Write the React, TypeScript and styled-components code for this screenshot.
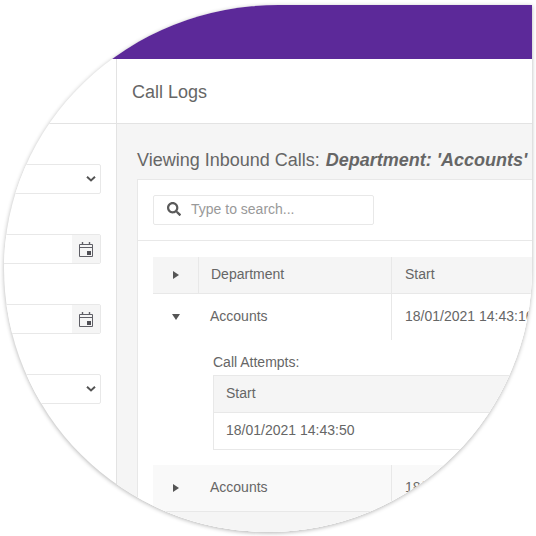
import React from "react";
import styled, { createGlobalStyle } from "styled-components";
import { FaSearch } from "react-icons/fa";

const Global = createGlobalStyle`
  html, body { margin: 0; padding: 0; background: #fff; }
  body { font-family: "Liberation Sans", Arial, sans-serif; color: #666; }
`;

const Page = styled.div`
  width: 536px;
  height: 536px;
  padding: 5px 4px 4px 4px;
  box-sizing: border-box;
  background: #fff;
  overflow: hidden;
`;

const Shell = styled.div`
  width: 528px;
  height: 527px;
  border-radius: 52% 0 50% 50% / 50% 0 50% 50%;
  overflow: hidden;
  background: #fff;
  box-shadow: 0 1px 4px rgba(0, 0, 0, 0.3);
  display: flex;
  flex-direction: column;
`;

const TopBar = styled.div`
  height: 54px;
  flex: none;
  background: #5c2999;
`;

const Body = styled.div`
  flex: 1;
  min-height: 0;
  display: flex;
`;

const Sidebar = styled.aside`
  width: 112px;
  flex: none;
  border-right: 1px solid #e3e3e3;
  display: flex;
  flex-direction: column;
  overflow: hidden;
`;

const SideHead = styled.div`
  height: 64px;
  flex: none;
  border-bottom: 1px solid #e3e3e3;
`;

const Fields = styled.div`
  display: flex;
  flex-direction: column;
  align-items: flex-end;
  gap: 40px;
  padding: 40px 15px 0 0;
`;

const Field = styled.div`
  width: 200px;
  height: 30px;
  flex: none;
  box-sizing: border-box;
  border: 1px solid #e8e8e8;
  border-radius: 2px;
  background: #fff;
  display: flex;
  justify-content: flex-end;
  align-items: stretch;
`;

const Chevron = styled.span`
  width: 14px;
  display: flex;
  align-items: center;
  color: #555;
`;

const Addon = styled.span`
  width: 28px;
  background: #f5f5f5;
  display: flex;
  align-items: center;
  justify-content: center;
`;

const Main = styled.main`
  flex: 1;
  min-width: 0;
  display: flex;
  flex-direction: column;
  overflow: hidden;
`;

const Header = styled.header`
  height: 65px;
  flex: none;
  box-sizing: border-box;
  border-bottom: 1px solid #e3e3e3;
  padding: 2px 0 0 15px;
  display: flex;
  align-items: center;
  font-size: 18px;
  color: #666;
`;

const Content = styled.div`
  flex: 1;
  min-height: 0;
  background: #f5f5f5;
  padding: 26px 0 0 20px;
`;

const Title = styled.h2`
  margin: 0 0 9px;
  font-size: 18px;
  line-height: 20px;
  font-weight: 400;
  color: #666;
  white-space: nowrap;
  em { font-weight: 700; font-style: italic; margin-left: 1px; }
`;

const Card = styled.section`
  width: 600px;
  background: #fff;
  border: 1px solid #e8e8e8;
  box-sizing: border-box;
`;

const SearchBar = styled.div`
  padding: 15px;
  border-bottom: 1px solid #e8e8e8;
`;

const SearchBox = styled.div`
  width: 221px;
  height: 30px;
  box-sizing: border-box;
  border: 1px solid #e8e8e8;
  border-radius: 2px;
  display: flex;
  align-items: center;
  padding: 0 0 2px 13px;
  gap: 10px;
  font-size: 14px;
  color: #999;
  svg { color: #5a5a5a; }
`;

const TableWrap = styled.div`
  padding: 16px 15px 0;
`;

const RowGrid = styled.div<{ $tone?: string; $line?: boolean; $height: number }>`
  display: grid;
  grid-template-columns: 45px 193px 1fr;
  height: ${(p) => p.$height}px;
  box-sizing: border-box;
  background: ${(p) => p.$tone ?? "#fff"};
  border-bottom: ${(p) => (p.$line ? "1px solid #e8e8e8" : "0")};
  font-size: 14px;
  color: #666;
`;

const ToggleCell = styled.div`
  display: flex;
  align-items: center;
  justify-content: center;
  padding-left: 1px;
`;

const Cell = styled.div<{ $pad?: number }>`
  display: flex;
  align-items: center;
  border-left: 1px solid #e8e8e8;
  padding: 0 0 2px ${(p) => p.$pad ?? 12}px;
  white-space: nowrap;
`;

const PlainCell = styled(Cell)`
  border-left: 0;
`;

const Detail = styled.div`
  padding: 14px 0 15px 60px;
`;

const DetailLabel = styled.div`
  font-size: 14px;
  line-height: 16px;
  margin-bottom: 5px;
  color: #666;
`;

const Nested = styled.div`
  border: 1px solid #e8e8e8;
  border-right: 0;
  font-size: 14px;
  color: #666;
`;

const NestedHead = styled.div`
  height: 37px;
  box-sizing: border-box;
  background: #f5f5f5;
  border-bottom: 1px solid #e8e8e8;
  display: flex;
  align-items: center;
  padding: 0 0 2px 12px;
`;

const NestedRow = styled.div`
  height: 36px;
  box-sizing: border-box;
  display: flex;
  align-items: center;
  padding: 0 0 2px 12px;
`;

const Foot = styled.div`
  height: 40px;
  background: #f5f5f5;
`;

const CaretRight = () => (
  <svg width="6" height="8" viewBox="0 0 6 8" aria-hidden="true">
    <path d="M0 0l6 4-6 4z" fill="#555" />
  </svg>
);

const CaretDown = () => (
  <svg width="8" height="6" viewBox="0 0 8 6" aria-hidden="true">
    <path d="M0 0h8L4 6z" fill="#555" />
  </svg>
);

const ChevronIcon = () => (
  <svg width="10" height="6" viewBox="0 0 10 6" aria-hidden="true">
    <path d="M1 .8l4 3.6L9 .8" fill="none" stroke="#555" strokeWidth="2" />
  </svg>
);

const CalendarIcon = () => (
  <svg width="14" height="15" viewBox="0 0 14 15" aria-hidden="true">
    <path d="M.5 2.500h13v12H.5z" fill="none" stroke="#5f5f66" />
    <path d="M.5 5.500h13" stroke="#5f5f66" />
    <path d="M3.500 0v3M10.500 0v3" stroke="#5f5f66" strokeWidth="1.4" />
    <path d="M8 9h4v4H8z" fill="#4f4f55" />
  </svg>
);

const SelectField = () => (
  <Field>
    <Chevron>
      <ChevronIcon />
    </Chevron>
  </Field>
);

const DateField = () => (
  <Field>
    <Addon>
      <CalendarIcon />
    </Addon>
  </Field>
);

export default function App() {
  return (
    <Page>
      <Global />
      <Shell>
        <TopBar />
        <Body>
          <Sidebar>
            <SideHead />
            <Fields>
              <SelectField />
              <DateField />
              <DateField />
              <SelectField />
            </Fields>
          </Sidebar>
          <Main>
            <Header>Call Logs</Header>
            <Content>
              <Title>
                Viewing Inbound Calls: <em>Department: 'Accounts'</em>
              </Title>
              <Card>
                <SearchBar>
                  <SearchBox>
                    <FaSearch size={14} />
                    Type to search...
                  </SearchBox>
                </SearchBar>
                <TableWrap>
                  <RowGrid $tone="#f5f5f5" $line $height={37}>
                    <ToggleCell>
                      <CaretRight />
                    </ToggleCell>
                    <Cell>Department</Cell>
                    <Cell $pad={13}>Start</Cell>
                  </RowGrid>
                  <RowGrid $height={46}>
                    <ToggleCell>
                      <CaretDown />
                    </ToggleCell>
                    <PlainCell>Accounts</PlainCell>
                    <Cell $pad={13}>18/01/2021 14:43:16</Cell>
                  </RowGrid>
                  <Detail>
                    <DetailLabel>Call Attempts:</DetailLabel>
                    <Nested>
                      <NestedHead>Start</NestedHead>
                      <NestedRow>18/01/2021 14:43:50</NestedRow>
                    </Nested>
                  </Detail>
                  <RowGrid $tone="#f9f9f9" $line $height={47}>
                    <ToggleCell>
                      <CaretRight />
                    </ToggleCell>
                    <PlainCell>Accounts</PlainCell>
                    <Cell $pad={13}>18/01/2021 14:43:16</Cell>
                  </RowGrid>
                  <Foot />
                </TableWrap>
              </Card>
            </Content>
          </Main>
        </Body>
      </Shell>
    </Page>
  );
}
